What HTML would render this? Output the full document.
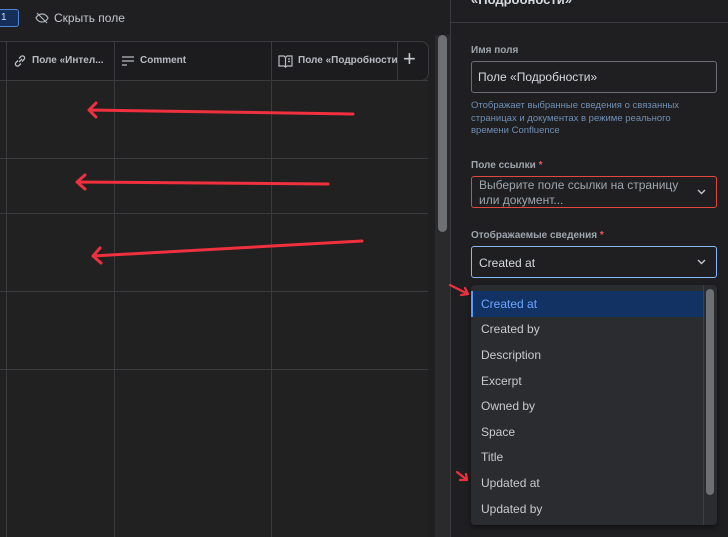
<!DOCTYPE html>
<html><head><meta charset="utf-8"><style>
*{box-sizing:border-box;margin:0;padding:0}
body{width:728px;height:537px;overflow:hidden;background:#1f1f21;font-family:"Liberation Sans",sans-serif;color:#c9ccd1;position:relative}
.abs{position:absolute}
.vl{position:absolute;width:1px;background:#3a3b3e}
.hl{position:absolute;height:1px;background:#3a3b3e}
.lbl{font-size:10px;font-weight:bold;color:#9fa5ad}
.item{position:absolute;left:471px;width:232px;height:26px;font-size:12px;color:#c7cad0;padding-left:10px;line-height:26px}
</style></head><body>
<div class="abs" style="left:-10px;top:9px;width:29px;height:18px;border:1px solid #4f86d8;border-radius:3px;background:#14305a;color:#cfe0ff;font-size:10px;line-height:16px;padding-left:10px">1</div>
<svg class="abs" style="left:35px;top:11px" width="14" height="14" viewBox="0 0 14 14" fill="none" stroke="#aeb3ba" stroke-width="1.2"><path d="M1 7c1.5-3 3.5-4 6-4s4.5 1 6 4c-1.5 3-3.5 4-6 4S2.5 10 1 7z"/><path d="M2 2l10 10"/></svg>
<div class="abs" style="left:54px;top:11px;font-size:12px;color:#c3c7cd">Скрыть поле</div>
<div class="abs" style="left:0;top:41px;width:429px;height:40px;border:1px solid #3a3b3e;border-left:none;border-radius:0 8px 8px 0;background:#1c1c1f"></div>
<div class="abs" style="left:0;top:80px;width:428px;height:457px;background:#212122"></div>
<div class="vl" style="left:6px;top:41px;height:496px"></div>
<div class="vl" style="left:114px;top:41px;height:496px"></div>
<div class="vl" style="left:271px;top:41px;height:496px"></div>
<div class="vl" style="left:397px;top:41px;height:40px"></div>
<div class="hl" style="left:0;top:80px;width:428px"></div>
<div class="hl" style="left:0;top:158px;width:428px"></div>
<div class="hl" style="left:0;top:213px;width:428px"></div>
<div class="hl" style="left:0;top:291px;width:428px"></div>
<div class="hl" style="left:0;top:369px;width:428px"></div>
<svg class="abs" style="left:13px;top:54px" width="14" height="14" viewBox="0 0 14 14" fill="none" stroke="#b8bcc2" stroke-width="1.3"><path d="M6 8l3-3M5 6.5L3 8.5a2 2 0 003 3l2-2M9 7.5l2-2a2 2 0 00-3-3l-2 2"/></svg>
<div class="abs" style="left:32px;top:55px;font-size:10px;font-weight:bold;color:#b8bcc2">Поле «Интел...</div>
<svg class="abs" style="left:121px;top:54px" width="14" height="14" viewBox="0 0 14 14" fill="none" stroke="#b8bcc2" stroke-width="1.3"><path d="M1 3h12M1 7h12M1 11h5"/></svg>
<div class="abs" style="left:140px;top:55px;font-size:10px;font-weight:bold;color:#b8bcc2">Comment</div>
<svg class="abs" style="left:278px;top:54px" width="15" height="14" viewBox="0 0 15 14" fill="none" stroke="#b8bcc2" stroke-width="1.2"><path d="M1 2h5l1.5 1.5V13L6 12H1zM7.5 3.5L9 2h5v10H9l-1.5 1"/><path d="M10 5h2M10 7.5h2"/></svg>
<div class="abs" style="left:298px;top:55px;font-size:10px;font-weight:bold;color:#b8bcc2;width:99px;overflow:hidden;white-space:nowrap">Поле «Подробности»</div>
<div class="abs" style="left:403px;top:46px;font-size:22px;color:#c3c7cd">+</div>
<div class="abs" style="left:435px;top:35px;width:15px;height:502px;background:#2a2a2c"></div>
<div class="abs" style="left:438px;top:35px;width:9px;height:197px;border-radius:5px;background:#6e6f72"></div>
<svg class="abs" style="left:0;top:0" width="450" height="537" fill="none" stroke="#f0303e" stroke-width="3" stroke-linecap="round" stroke-linejoin="round">
<path d="M353 114L89 110M96 103l-7 7 7 7"/>
<path d="M328 184L77 182M85 175l-8 7 8 7"/>
<path d="M362 241L93 256M100 248l-7 8 8 7"/>
</svg>
<div class="abs" style="left:450px;top:0;width:278px;height:537px;background:#1f1f21;border-left:1px solid #3a3b3e"></div>
<div class="hl" style="left:451px;top:22px;width:277px"></div>
<div class="abs" style="left:471px;top:-8px;font-size:13px;font-weight:bold;color:#d6d9de">«Подробности»</div>
<div class="abs lbl" style="left:471px;top:45px">Имя поля</div>
<div class="abs" style="left:471px;top:61px;width:246px;height:32px;border:1px solid #6b6e74;border-radius:3px;font-size:12px;color:#d6d9de;padding:8px 6px">Поле «Подробности»</div>
<div class="abs" style="left:471px;top:100px;width:232px;font-size:9.5px;line-height:12.5px;color:#6f8fb5">Отображает выбранные сведения о связанных страницах и документах в режиме реального времени Confluence</div>
<div class="abs lbl" style="left:471px;top:160px">Поле ссылки <span style="color:#f05a5a">*</span></div>
<div class="abs" style="left:471px;top:176px;width:246px;height:32px;border:1px solid #e2483d;border-radius:3px;font-size:12px;line-height:15px;color:#9fa5ad;padding:1px 7px">Выберите поле ссылки на страницу<br>или документ...</div>
<svg class="abs" style="left:697px;top:189px" width="9" height="6" viewBox="0 0 9 6" fill="none" stroke="#c3c7cd" stroke-width="1.4"><path d="M1 1l3.5 3.5L8 1"/></svg>
<div class="abs lbl" style="left:471px;top:230px">Отображаемые сведения <span style="color:#f05a5a">*</span></div>
<div class="abs" style="left:471px;top:246px;width:246px;height:32px;border:1px solid #85b8ff;border-radius:3px;font-size:12px;color:#d6d9de;padding:9px 7px">Created at</div>
<svg class="abs" style="left:697px;top:259px" width="9" height="6" viewBox="0 0 9 6" fill="none" stroke="#c3c7cd" stroke-width="1.4"><path d="M1 1l3.5 3.5L8 1"/></svg>
<div class="abs" style="left:471px;top:285px;width:246px;height:240px;background:#2b2c2f;border-radius:4px;box-shadow:0 2px 6px rgba(0,0,0,.5)"></div>
<div class="abs" style="left:703px;top:285px;width:1px;height:240px;background:#3e3f42"></div>
<div class="abs" style="left:706px;top:289px;width:8px;height:206px;border-radius:4px;background:#6e6f72"></div>
<div class="item" style="top:291px;background:#123263;color:#6ea6ff;border-left:2px solid #579dff;padding-left:8px">Created at</div>
<div class="item" style="top:316px">Created by</div>
<div class="item" style="top:342px">Description</div>
<div class="item" style="top:368px">Excerpt</div>
<div class="item" style="top:393px">Owned by</div>
<div class="item" style="top:419px">Space</div>
<div class="item" style="top:444px">Title</div>
<div class="item" style="top:470px">Updated at</div>
<div class="item" style="top:496px">Updated by</div>
<svg class="abs" style="left:445px;top:280px" width="30" height="220" fill="none" stroke="#f0303e" stroke-width="2.2" stroke-linecap="round" stroke-linejoin="round">
<path d="M5 5l18 9M16 15l7-1-3-6"/>
<path d="M12 192l10 8M15 200l7 0-1-6"/>
</svg>
</body></html>
